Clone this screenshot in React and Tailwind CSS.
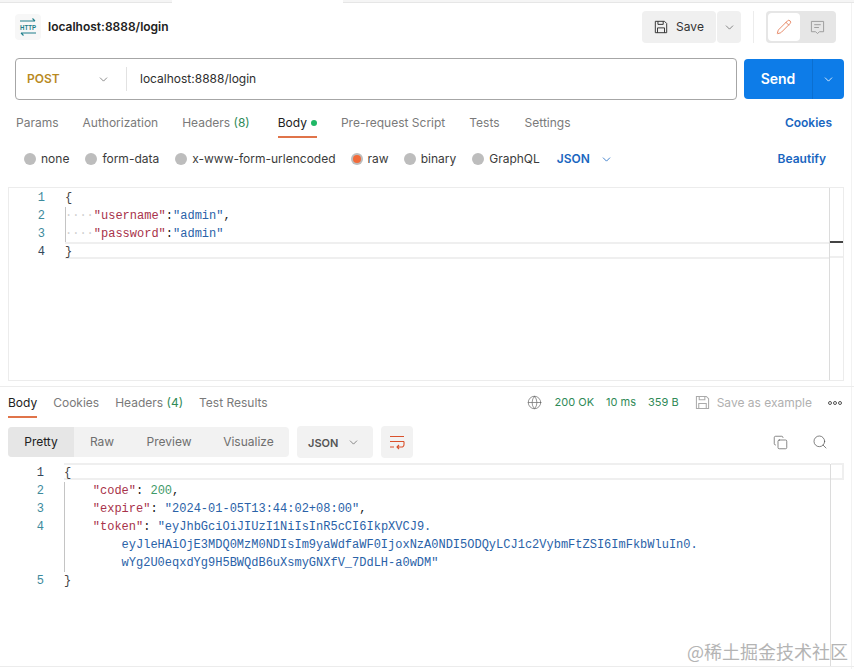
import React from 'react';
import { ChevronDown, Pencil, Globe, Copy, Search } from 'lucide-react';

const uiFont = { fontFamily: 'Inter, "Liberation Sans", sans-serif' };

function SaveIcon({ className }) {
  return (
    <svg viewBox="0 0 16 16" fill="none" stroke="currentColor" strokeWidth="1.1" className={className}>
      <path d="M1.5 1.5h10.5l2.500 2.500v10.500h-13z" />
      <path d="M4.500 1.500v3.500h6v-3.500" />
      <path d="M4 14.500v-5.500h8v5.500" />
    </svg>
  );
}

function CommentIcon({ className }) {
  return (
    <svg viewBox="0 0 16 16" fill="none" stroke="currentColor" strokeWidth="1" className={className}>
      <path d="M1.500 1.500h13v11h-4.500l-2 2-2-2h-4.500z" />
      <path d="M4.500 5h7M4.500 8h5" />
    </svg>
  );
}

function WrapIcon({ className }) {
  return (
    <svg viewBox="0 0 16 16" fill="none" stroke="currentColor" strokeWidth="1.1" className={className}>
      <path d="M1 2.500h14M1 7.500h14M1 13h4" />
      <path d="M15 7.500v3a2.500 2.500 0 0 1-2.500 2.500h-4.500M10 11l-2 2 2 2" />
    </svg>
  );
}

function HttpIcon() {
  return (
    <div className="w-[26px] h-[26px] rounded bg-[#f7f7f7] flex items-center justify-center">
      <svg viewBox="0 0 18 18" className="w-[18px] h-[18px] overflow-visible" fill="none" stroke="#1f7f8c" strokeWidth="1.1">
        <path d="M1 3h15M13.500 0.500l2.500 2.500" />
        <path d="M17 15h-15M4.500 17.500l-2.500-2.500" />
        <text x="1" y="11.500" fontSize="7" fontWeight="700" fontFamily="Liberation Sans" textLength="16" lengthAdjust="spacingAndGlyphs" fill="#1f7f8c" stroke="none">HTTP</text>
      </svg>
    </div>
  );
}

function Radio({ label, active }) {
  return (
    <div className="flex items-center gap-[5px]">
      {active ? (
        <span className="w-3 h-3 rounded-full bg-[#bdbdbd] flex items-center justify-center">
          <span className="w-2 h-2 rounded-full bg-[#f26b3a]" />
        </span>
      ) : (
        <span className="w-3 h-3 rounded-full bg-[#bdbdbd]" />
      )}
      <span className="text-xs text-[#3b3b3b]">{label}</span>
    </div>
  );
}

function Tab({ children, active, className }) {
  return (
    <div className={`relative text-xs h-full flex items-center ${active ? 'text-[#212121]' : 'text-[#7a7a7a]'} ${className || ''}`}>
      {children}
      {active && <span className="absolute left-0 right-0 bottom-0 h-[2px] bg-[#e0744a]" />}
    </div>
  );
}

function CodeLine({ num, active, guide, numColor, children }) {
  return (
    <div className="flex h-[18px] leading-[18px]">
      <div className={`w-[36px] text-right ${numColor || 'text-[#3d8a9c]'}`}>{num}</div>
      <div
        className={`flex-1 ml-5 whitespace-pre ${guide ? 'shadow-[inset_1px_0_0_#c4c4c4]' : ''} ${
          active ? 'relative -top-[1px] h-[17px] border-y-2 border-[#efefef] leading-[16px]' : ''
        }`}
      >
        {children}
      </div>
    </div>
  );
}

const Key = ({ children }) => <span className="text-[#a8324a]">{children}</span>;
const Str = ({ children }) => <span className="text-[#2a62a8]">{children}</span>;
const Ws = () => <span className="text-[#d0d0d0]">····</span>;

export default function App() {
  return (
    <div
      className="relative w-[854px] h-[669px] bg-white overflow-hidden text-[#212121] shadow-[inset_-2px_0_0_#ffffff,inset_-3px_0_0_#f2f2f2]"
      style={uiFont}
    >
      {/* top tab strip */}
      <div className="flex h-[3px]">
        <div className="w-[172px] bg-[#f5f5f5] border-b border-[#e6e6e6]" />
        <div className="w-[171px] bg-white" />
        <div className="flex-1 bg-[#f5f5f5] border-b border-[#e6e6e6]" />
      </div>

      {/* request title and save */}
      <div className="flex items-center h-[48px] pl-[15px] pr-[18px]">
        <HttpIcon />
        <div className="ml-[7px] text-xs font-semibold text-[#212121]">localhost:8888/login</div>
        <div className="ml-auto flex items-center">
          <div className="w-[74px] h-8 bg-[#f0f0f0] rounded flex items-center justify-center gap-[7px] text-xs text-[#333]">
            <SaveIcon className="w-[14px] h-[14px]" />
            <span className="ml-[1px]">Save</span>
          </div>
          <div className="ml-[1px] w-[24px] h-8 bg-[#f0f0f0] rounded flex items-center justify-center">
            <ChevronDown className="w-[13px] h-[13px] text-[#555]" strokeWidth={1.25} />
          </div>
          <div className="w-px h-8 bg-[#ececec] mx-3" />
          <div className="w-[70px] h-8 bg-[#e6e6e6] rounded flex items-center p-[2px]">
            <div className="w-[32px] h-7 bg-white rounded flex items-center justify-center">
              <Pencil className="w-[16px] h-[16px] text-[#e2734c]" strokeWidth={1.25} />
            </div>
            <div className="flex-1 flex items-center justify-center">
              <CommentIcon className="w-[15px] h-[15px] text-[#9a9a9a]" />
            </div>
          </div>
        </div>
      </div>

      {/* url bar */}
      <div className="flex mt-[7px] pl-[15px] pr-[10px] h-[42px] gap-[7px]">
        <div className="flex-1 border border-[#a6a6a6] rounded flex items-center">
          <div className="w-[110px] pl-[11px] pr-[16px] flex items-center justify-between">
            <span className="text-xs font-semibold text-[#b98a1f]">POST</span>
            <ChevronDown className="w-[13px] h-[13px] text-[#555]" strokeWidth={1.25} />
          </div>
          <div className="w-px h-6 bg-[#e2e2e2]" />
          <div className="ml-[13px] text-xs text-[#2e2e2e]">localhost:8888/login</div>
        </div>
        <div className="w-[100px] h-10 mt-[1px] bg-[#0d7ce8] rounded flex text-white">
          <div className="flex-1 flex items-center justify-center text-sm font-semibold">Send</div>
          <div className="w-8 border-l border-[#0b6fd0] flex items-center justify-center">
            <ChevronDown className="w-[13px] h-[13px]" strokeWidth={1.5} />
          </div>
        </div>
      </div>

      {/* request tabs */}
      <div className="flex items-center h-[29px] mt-[9px] pl-4 pr-[22px]">
        <Tab className="mr-6 pb-[2px]">Params</Tab>
        <Tab className="mr-6 pb-[2px]">Authorization</Tab>
        <Tab className="mr-[28px] pb-[2px]">Headers&nbsp;<span className="text-[#2f8a57]">(8)</span></Tab>
        <Tab active className="mr-6 pb-[2px]">
          Body<span className="w-[6px] h-[6px] ml-[4px] rounded-full bg-[#1fb866]" />
        </Tab>
        <Tab className="mr-6 pb-[2px]">Pre-request Script</Tab>
        <Tab className="mr-[25px] pb-[2px]">Tests</Tab>
        <Tab className="pb-[2px]">Settings</Tab>
        <div className="ml-auto pb-[2px] text-xs font-semibold text-[#1a66c0]">Cookies</div>
      </div>

      {/* body type */}
      <div className="flex items-center h-[20px] mt-[11px] pl-[24px] pr-[28px]">
        <div className="flex items-center gap-4">
          <Radio label="none" />
          <Radio label="form-data" />
          <div className="-mr-[1px]">
            <Radio label="x-www-form-urlencoded" />
          </div>
          <div className="-mr-[1px]">
            <Radio label="raw" active />
          </div>
          <Radio label="binary" />
          <Radio label="GraphQL" />
        </div>
        <div className="ml-[17px] flex items-center gap-[10px] text-xs font-semibold text-[#1a66c0]">
          JSON
          <ChevronDown className="w-[13px] h-[13px]" strokeWidth={1.5} />
        </div>
        <div className="ml-auto text-xs font-semibold text-[#1a66c0]">Beautify</div>
      </div>

      {/* request editor */}
      <div className="flex mt-[18px] ml-2 mr-[10px] h-[194px] border border-[#ececec] text-xs" style={{ fontFamily: '"Liberation Mono", monospace' }}>
        <div className="flex-1 pt-[1px]">
          <CodeLine num="1"><span className="text-[#444]">{'{'}</span></CodeLine>
          <CodeLine num="2" guide><Ws /><Key>"username"</Key>:<Str>"admin"</Str>,</CodeLine>
          <CodeLine num="3" guide><Ws /><Key>"password"</Key>:<Str>"admin"</Str></CodeLine>
          <CodeLine num="4" numColor="text-[#33475b]" active><span className="text-[#444]">{'}'}</span></CodeLine>
        </div>
        <div className="w-[14px] border-l border-[#dcdcdc]">
          <div className="mt-[53px] h-[17px] border-t-2 border-t-[#444] border-b-2 border-b-[#efefef]" />
        </div>
      </div>

      <div className="h-px bg-[#ececec] mt-[5px]" />

      {/* response tabs */}
      <div className="flex items-center h-[31px] pl-2 pr-3">
        <Tab active className="mr-4">Body</Tab>
        <Tab className="mr-4">Cookies</Tab>
        <Tab className="mr-4">Headers&nbsp;<span className="text-[#2f8a57]">(4)</span></Tab>
        <Tab>Test Results</Tab>
        <div className="ml-auto flex items-center text-[11px] text-[#2f8a57]">
          <Globe className="w-[15px] h-[15px] text-[#666] mr-[13px]" strokeWidth={1.1} />
          <span className="mr-3">200 OK</span>
          <span className="mr-3">10 ms</span>
          <span className="mr-4">359 B</span>
          <SaveIcon className="w-[15px] h-[15px] text-[#aaa] mr-[7px]" />
          <span className="text-xs text-[#b0b0b0] mr-4">Save as example</span>
          <span className="flex gap-[1px]">
            <span className="w-1 h-1 rounded-full border border-[#555]" />
            <span className="w-1 h-1 rounded-full border border-[#555]" />
            <span className="w-1 h-1 rounded-full border border-[#555]" />
          </span>
        </div>
      </div>

      {/* response toolbar */}
      <div className="flex items-center h-[32px] mt-[8px] pl-2 pr-[26px]">
        <div className="w-[281px] h-[30px] bg-[#f2f2f2] rounded flex items-center text-xs text-[#6f6f6f]">
          <div className="w-[66px] h-full bg-[#e6e6e6] rounded-l flex items-center justify-center text-[#212121]">Pretty</div>
          <div className="w-[62px] text-center pr-[6px]">Raw</div>
          <div className="w-[72px] text-center pr-[6px]">Preview</div>
          <div className="flex-1 text-center">Visualize</div>
        </div>
        <div className="ml-2 w-[76px] h-8 bg-[#f2f2f2] rounded flex items-center justify-between pl-[11px] pr-[13px] text-[11px] font-semibold text-[#555]">
          <span className="pt-[2px]">JSON</span>
          <ChevronDown className="w-[13px] h-[13px] text-[#555]" strokeWidth={1.25} />
        </div>
        <div className="ml-2 w-8 h-8 bg-[#f2f2f2] rounded flex items-center justify-center">
          <WrapIcon className="w-[16px] h-[16px] text-[#d9512c]" />
        </div>
        <div className="ml-auto flex items-center gap-[24px]">
          <Copy className="w-[15px] h-[15px] text-[#555]" strokeWidth={1.1} />
          <Search className="w-[16px] h-[16px] text-[#555]" strokeWidth={1.1} />
        </div>
      </div>

      {/* response body */}
      <div className="flex mt-[6px] ml-2 mr-[10px] h-[202px] text-xs" style={{ fontFamily: '"Liberation Mono", monospace' }}>
        <div className="flex-1">
          <CodeLine num="1" numColor="text-[#33475b]" active><span className="text-[#444]">{'{'}</span></CodeLine>
          <CodeLine num="2" guide>{'    '}<Key>"code"</Key>: <span className="text-[#3f9a68]">200</span>,</CodeLine>
          <CodeLine num="3" guide>{'    '}<Key>"expire"</Key>: <Str>"2024-01-05T13:44:02+08:00"</Str>,</CodeLine>
          <CodeLine num="4" guide>{'    '}<Key>"token"</Key>: <Str>"eyJhbGciOiJIUzI1NiIsInR5cCI6IkpXVCJ9.</Str></CodeLine>
          <CodeLine num="" guide><Str>{'        '}eyJleHAiOjE3MDQ0MzM0NDIsIm9yaWdfaWF0IjoxNzA0NDI5ODQyLCJ1c2VybmFtZSI6ImFkbWluIn0.</Str></CodeLine>
          <CodeLine num="" guide><Str>{'        '}wYg2U0eqxdYg9H5BWQdB6uXsmyGNXfV_7DdLH-a0wDM"</Str></CodeLine>
          <CodeLine num="5"><span className="text-[#444]">{'}'}</span></CodeLine>
        </div>
        <div className="w-[14px] border-l border-[#dcdcdc]">
          <div className="-mt-[1px] h-[17px] border-2 border-l-0 border-[#efefef]" />
        </div>
      </div>

      <div className="h-px bg-[#ececec]" />

      {/* watermark */}
      <div className="absolute right-[6px] bottom-[6px] text-lg leading-6 text-[#b4b4b4]" style={{ fontFamily: '"Noto Sans CJK SC", sans-serif' }}>
        @稀土掘金技术社区
      </div>
    </div>
  );
}
